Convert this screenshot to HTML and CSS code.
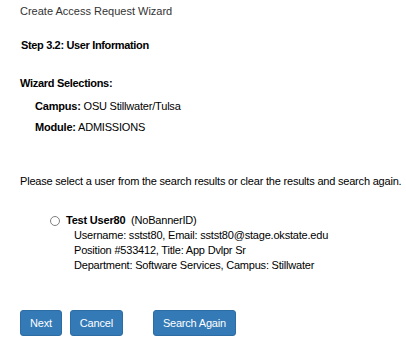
FILE: index.html
```html
<!DOCTYPE html>
<html>
<head>
<meta charset="utf-8">
<link rel="stylesheet" href="styles.css">
</head>
<body>
<div class="page">
  <div class="title">Create Access Request Wizard</div>
  <div class="step">Step 3.2: User Information</div>
  <div class="sel-head">Wizard Selections:</div>
  <div class="sel-row campus"><b>Campus:</b> OSU Stillwater/Tulsa</div>
  <div class="sel-row module"><b>Module:</b> ADMISSIONS</div>
  <div class="prompt">Please select a user from the search results or clear the results and search again.</div>
  <div class="result">
    <label class="result-head"><span class="radio"></span><b>Test User80</b>&nbsp;&nbsp;(NoBannerID)</label>
    <div class="details">
      <div>Username: sstst80, Email: sstst80@stage.okstate.edu</div>
      <div>Position #533412, Title: App Dvlpr Sr</div>
      <div>Department: Software Services, Campus: Stillwater</div>
    </div>
  </div>
  <div class="buttons">
    <button class="btn">Next</button>
    <button class="btn">Cancel</button>
    <button class="btn btn-gap">Search Again</button>
  </div>
</div>
</body>
</html>
```
FILE: styles.css
```css
html, body { margin: 0; padding: 0; background: #fff; }
body {
  font-family: "Liberation Sans", Arial, sans-serif;
  font-size: 11px;
  line-height: 15px;
  letter-spacing: -0.2px;
  color: #000;
}
b { font-weight: bold; letter-spacing: -0.2px; }
.page { padding: 4px 0 0 20px; }
.title { color: #333; letter-spacing: 0; }
.step { font-weight: bold; letter-spacing: -0.35px; margin-top: 19px; padding-left: 1px; }
.sel-head { font-weight: bold; letter-spacing: -0.3px; margin-top: 23px; }
.sel-row { padding-left: 15px; }
.campus { margin-top: 8px; }
.module { margin-top: 6px; }
.prompt { margin-top: 39px; white-space: nowrap; letter-spacing: -0.2px; }
.result { margin-top: 24px; padding-left: 30px; }
.result-head { display: flex; align-items: center; }
.radio {
  width: 10px; height: 10px;
  border: 1px solid #808080;
  border-radius: 50%;
  margin-right: 6px;
  box-sizing: border-box;
  flex: none;
}
.details { padding-left: 24px; }
.buttons { margin-top: 37px; display: flex; gap: 8px; }
.btn {
  font-family: "Liberation Sans", Arial, sans-serif;
  font-size: 11px;
  letter-spacing: -0.2px;
  height: 26px;
  padding: 0 9px;
  color: #fff;
  background: #337ab7;
  border: 1px solid #2e6da4;
  border-radius: 3px;
}
.btn-gap { margin-left: 22px; }
```
